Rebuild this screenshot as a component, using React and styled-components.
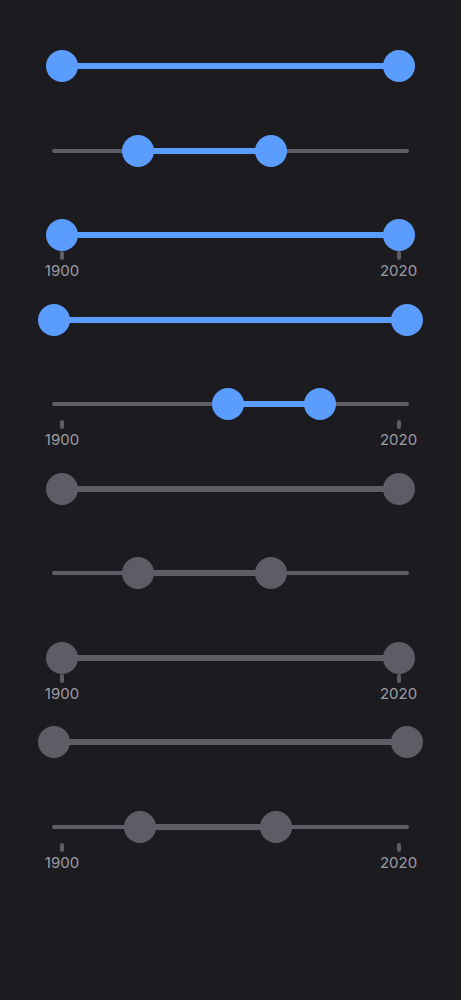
import React from "react";
import styled, {createGlobalStyle} from "styled-components";

const GlobalStyle = createGlobalStyle`
  html, body {
    margin: 0;
    padding: 0;
    background: #1c1c20;
  }
  body {
    font-family: Inter, "Noto Sans", sans-serif;
  }
`;

const BLUE = "#5b9dff";
const GRAY = "#5e5d66";

const Page = styled.div`
  width: 461px;
  min-height: 1000px;
  background: #1c1c20;
  padding: 50px 52px 0;
  box-sizing: border-box;
  display: flex;
  flex-direction: column;
  gap: 52.56px;
`;

const Slider = styled.div`
  position: relative;
  height: 32px;
`;

const Rail = styled.div`
  position: absolute;
  left: 0;
  right: 0;
  top: 14px;
  height: 4px;
  border-radius: 2px;
  background: ${GRAY};
`;

// area in which thumb centres move
const Range = styled.div`
  position: absolute;
  top: 0;
  bottom: 0;
  left: ${(p) => (p.$wide ? "1.7px" : "10px")};
  right: ${(p) => (p.$wide ? "2px" : "10.5px")};
`;

const Fill = styled.div`
  position: absolute;
  top: 13px;
  height: 6px;
  background: ${(p) => (p.$disabled ? GRAY : BLUE)};
`;

const Thumb = styled.div`
  position: absolute;
  top: 0;
  width: 32px;
  height: 32px;
  margin-left: -16px;
  border-radius: 50%;
  background: ${(p) => (p.$disabled ? GRAY : BLUE)};
`;

const Tick = styled.div`
  position: absolute;
  top: 32px;
  width: 4px;
  height: 9px;
  margin-left: -2px;
  border-radius: 2px;
  background: ${GRAY};
`;

const Label = styled.span`
  position: absolute;
  top: 43px;
  transform: translateX(-50%);
  font-size: 15px;
  line-height: 18px;
  color: #9c9ba2;
  white-space: nowrap;
`;

const MARKS = [
  [0, "1900"],
  [1, "2020"],
];

function RangeSlider({from = 0, to = 1, disabled, wide, marks}) {
  return (
    <Slider>
      <Rail />
      <Range $wide={wide}>
        {marks &&
          MARKS.map(([v, t]) => (
            <React.Fragment key={t}>
              <Tick style={{left: `${v * 100}%`}} />
              <Label style={{left: `${v * 100}%`}}>{t}</Label>
            </React.Fragment>
          ))}
        <Fill
          $disabled={disabled}
          style={{left: `${from * 100}%`, width: `${(to - from) * 100}%`}}
        />
        <Thumb $disabled={disabled} style={{left: `${from * 100}%`}} />
        <Thumb $disabled={disabled} style={{left: `${to * 100}%`}} />
      </Range>
    </Slider>
  );
}

export default function App() {
  return (
    <>
      <GlobalStyle />
      <Page>
        <RangeSlider />
        <RangeSlider from={0.226} to={0.622} />
        <RangeSlider marks />
        <RangeSlider wide />
        <RangeSlider from={0.494} to={0.768} marks />
        <RangeSlider disabled />
        <RangeSlider disabled from={0.226} to={0.622} />
        <RangeSlider disabled marks />
        <RangeSlider disabled wide />
        <RangeSlider disabled from={0.232} to={0.637} marks />
      </Page>
    </>
  );
}
